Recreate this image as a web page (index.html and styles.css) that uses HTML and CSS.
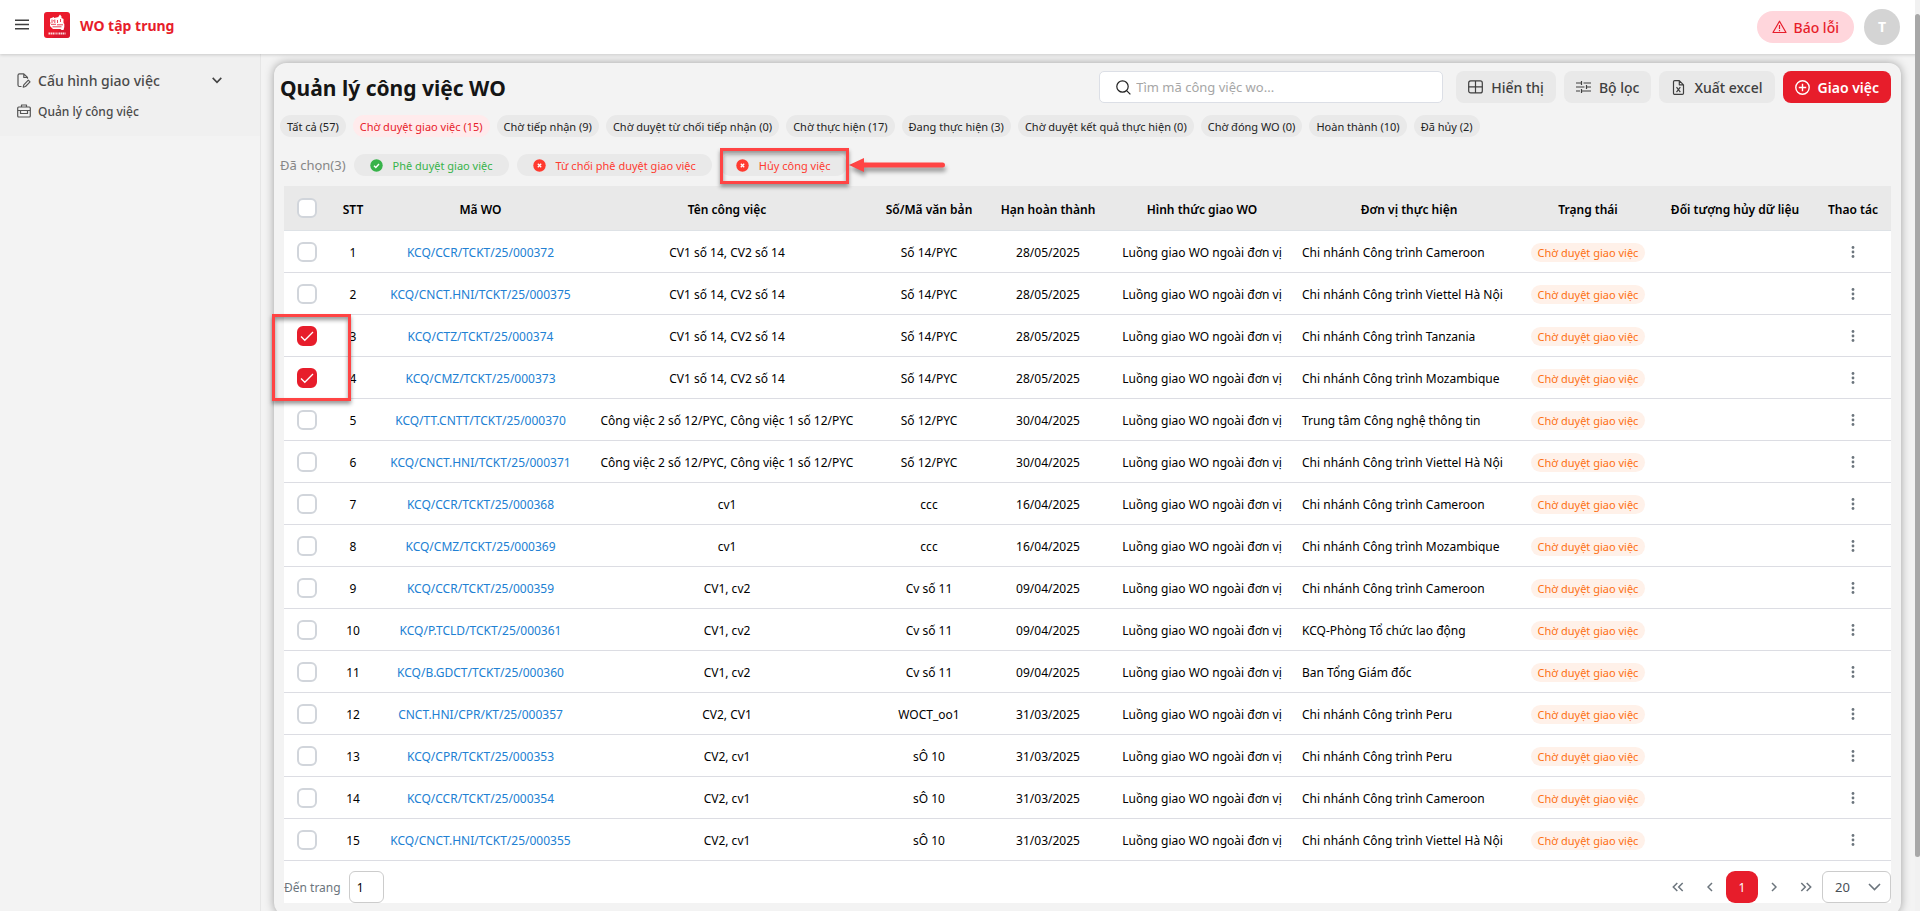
FILE: index.html
```html
<!DOCTYPE html>
<html lang="vi">
<head>
  <meta charset="UTF-8">
  <meta name="viewport" content="width=device-width, initial-scale=1.0">
  <title>Quản lý công việc WO</title>
  <link rel="stylesheet" href="styles.css">
</head>
<body>

  <header class="topbar">
    <button class="menu-btn" type="button" aria-label="Menu">
      <svg width="14" height="12" viewBox="0 0 14 12" fill="none" stroke="#3f3f3f" stroke-width="1.4"><path d="M0 1.2h14M0 5.5h14M0 9.8h14"/></svg>
    </button>
    <svg class="logo" width="26" height="26" viewBox="0 0 26 26">
      <rect width="26" height="26" rx="3" fill="#ea1a2c"/>
      <path d="M26 6v17a3 3 0 0 1-3 3H8z" fill="#cf1630" opacity=".6"/>
      <path d="M6 6.500l4-1.500v1l4.500-1V4.500l1.500-2 1.500 2v1.500l2 1v4l.8 1v3l-.8 3h-2l-1-1H9l-3-3v-2l.6-1L6 10z" fill="#fff"/>
      <path d="M8 7.500v3.500M10.800 7.500v3.500M13.500 8v3M16.500 7v3M9 8.800h1M7 12.300h5M13 12.800h6M8.500 14.800h9" stroke="#e4172f" stroke-width=".8"/>
      <path d="M4.500 21.500h7M14.500 21.500h7M12.300 21.500h1.200" stroke="#fff" stroke-width="2" stroke-dasharray="1.500 .5" opacity=".85"/>
    </svg>
    <span class="brand">WO tập trung</span>
    <button class="report-btn" type="button">
      <svg width="15" height="14" viewBox="0 0 15 14" fill="none" stroke="#e71d2b" stroke-width="1.200" stroke-linejoin="round"><path d="M7.500 1.200L14 12.500H1z"/><path d="M7.500 5v4M7.500 10v1.200"/></svg>
      Báo lỗi
    </button>
    <div class="avatar">T</div>
  </header>

  <div class="layout">
    <nav class="sidebar">
      <div class="menu">
        <a href="#" class="menu-item menu-parent">
          <svg width="14" height="15" viewBox="0 0 14 15" fill="none" stroke="#555" stroke-width="1.200" stroke-linejoin="round"><path d="M4.500 13.500h-2a1.500 1.500 0 0 1-1.500-1.500V2.200A1.500 1.500 0 0 1 2.500.8h4.300l3.700 3.700v1.300M6.800.8v3.700h3.700"/><path d="M11.300 7.200l1.700 1.700-4.500 4.600-2.300.6.600-2.300z"/></svg>
          <span>Cấu hình giao việc</span>
          <svg class="chevron" width="10" height="7" viewBox="0 0 10 7" fill="none" stroke="#444" stroke-width="1.600"><path d="M.7.900L5 5.300 9.300.900"/></svg>
        </a>
        <a href="#" class="menu-item menu-child">
          <svg width="14" height="14" viewBox="0 0 14 14" fill="none" stroke="#555" stroke-width="1.200" stroke-linejoin="round"><rect x=".7" y="3" width="12.600" height="10" rx="1"/><path d="M4.500 3V1h5v2M.7 6.500h12.600M3.500 6.500v3h7v-3"/></svg>
          <span>Quản lý công việc</span>
        </a>
      </div>
    </nav>

    <main class="content">
      <section class="card">
        <div class="card-head">
          <h1>Quản lý công việc WO</h1>
          <label class="search">
            <svg width="15" height="15" viewBox="0 0 15 15" fill="none" stroke="#222" stroke-width="1.200"><circle cx="6.500" cy="6.500" r="5.700"/><path d="M10.600 10.600l3.800 3.800"/></svg>
            <input type="text" placeholder="Tìm mã công việc wo..." aria-label="Tìm mã công việc wo">
          </label>
          <div class="actions">
            <button class="btn" type="button">
              <svg width="15" height="14" viewBox="0 0 15 14" fill="none" stroke="#3f3f3f" stroke-width="1.200"><rect x=".7" y=".9" width="13.600" height="12" rx="2"/><path d="M7.500 1v12M.7 6.900h13.600"/></svg>
              Hiển thị
            </button>
            <button class="btn" type="button">
              <svg width="15" height="14" viewBox="0 0 15 14" fill="none" stroke="#3f3f3f" stroke-width="1.200"><path d="M0 3h5.500M5.500 1v4M7.500 3H15M0 7h8.500M10.500 5v4M10.500 7H15M0 11h4M5.500 9v4M5.500 11H15"/></svg>
              Bộ lọc
            </button>
            <button class="btn" type="button">
              <svg width="15" height="15" viewBox="0 0 15 15" fill="none" stroke="#3f3f3f" stroke-width="1.200" stroke-linejoin="round"><path d="M2.500 1.800A1.200 1.200 0 0 1 3.700.6h4.600l4.200 4.200v8.400a1.200 1.200 0 0 1-1.200 1.200H3.700a1.200 1.200 0 0 1-1.200-1.200zM8.300.6v4.200h4.200"/><path d="M5.500 7.200l3.800 5M9.300 7.200l-3.800 5"/></svg>
              Xuất excel
            </button>
            <button class="btn btn-primary" type="button">
              <svg width="15" height="15" viewBox="0 0 15 15" fill="none" stroke="#fff" stroke-width="1.400"><circle cx="7.500" cy="7.500" r="6.700"/><path d="M7.500 3.800v7.400M3.800 7.500h7.400"/></svg>
              Giao việc
            </button>
          </div>
        </div>

        <div class="chips">
          <button class="chip" type="button">Tất cả (57)</button>
          <button class="chip active" type="button">Chờ duyệt giao việc (15)</button>
          <button class="chip" type="button">Chờ tiếp nhận (9)</button>
          <button class="chip" type="button">Chờ duyệt từ chối tiếp nhận (0)</button>
          <button class="chip" type="button">Chờ thực hiện (17)</button>
          <button class="chip" type="button">Đang thực hiện (3)</button>
          <button class="chip" type="button">Chờ duyệt kết quả thực hiện (0)</button>
          <button class="chip" type="button">Chờ đóng WO (0)</button>
          <button class="chip" type="button">Hoàn thành (10)</button>
          <button class="chip" type="button">Đã hủy (2)</button>
        </div>

        <div class="bulk">
          <span class="bulk-count">Đã chọn(3)</span>
          <button class="bulk-btn approve" type="button">
            <svg width="13" height="13" viewBox="0 0 13 13"><circle cx="6.500" cy="6.500" r="6.200" fill="#37b34a"/><path d="M4 6.700l1.800 1.700L9 5" fill="none" stroke="#fff" stroke-width="1.400"/></svg>
            Phê duyệt giao việc
          </button>
          <button class="bulk-btn reject" type="button">
            <svg width="13" height="13" viewBox="0 0 13 13"><circle cx="6.500" cy="6.500" r="6.200" fill="#ff3b30"/><path d="M4.800 4.800l3.400 3.400M8.200 4.800L4.800 8.200" stroke="#fff" stroke-width="1.300"/></svg>
            Từ chối phê duyệt giao việc
          </button>
          <div class="marked">
            <button class="bulk-btn reject" type="button">
              <svg width="13" height="13" viewBox="0 0 13 13"><circle cx="6.500" cy="6.500" r="6.200" fill="#ff3b30"/><path d="M4.800 4.800l3.400 3.400M8.200 4.800L4.800 8.200" stroke="#fff" stroke-width="1.300"/></svg>
              Hủy công việc
            </button>
            <div class="frame frame-action"></div>
            <svg class="arrow" width="96" height="16" viewBox="0 0 96 16"><path d="M0 8L15 1v4.500h78.500a2.500 2.500 0 0 1 0 5H15V15z" fill="#ff4444"/></svg>
          </div>
        </div>

        <div class="table-box">
          <table class="wo-table">
            <colgroup>
              <col class="c-check"><col class="c-stt"><col class="c-code"><col class="c-name"><col class="c-doc"><col class="c-date"><col class="c-type"><col class="c-unit"><col class="c-status"><col class="c-cancel"><col class="c-action">
            </colgroup>
            <thead>
              <tr>
                <th><input type="checkbox" class="check" aria-label="Chọn tất cả"></th>
                <th>STT</th>
                <th>Mã WO</th>
                <th>Tên công việc</th>
                <th>Số/Mã văn bản</th>
                <th>Hạn hoàn thành</th>
                <th>Hình thức giao WO</th>
                <th>Đơn vị thực hiện</th>
                <th>Trạng thái</th>
                <th>Đối tượng hủy dữ liệu</th>
                <th>Thao tác</th>
              </tr>
            </thead>
            <tbody id="rows"></tbody>
          </table>

          <div class="pager">
            <label for="goto">Đến trang</label>
            <input id="goto" class="goto" type="text" value="1">
            <div class="pages">
              <button type="button" aria-label="Trang đầu"><svg width="12" height="10" viewBox="0 0 12 10" fill="none" stroke="#6c757d" stroke-width="1.500"><path d="M5.300 1L1.300 5l4 4M10.700 1l-4 4 4 4"/></svg></button>
              <button type="button" aria-label="Trang trước"><svg width="6" height="10" viewBox="0 0 6 10" fill="none" stroke="#6c757d" stroke-width="1.500"><path d="M5 1L1 5l4 4"/></svg></button>
              <button type="button" class="current">1</button>
              <button type="button" aria-label="Trang sau"><svg width="6" height="10" viewBox="0 0 6 10" fill="none" stroke="#6c757d" stroke-width="1.500"><path d="M1 1l4 4-4 4"/></svg></button>
              <button type="button" aria-label="Trang cuối"><svg width="12" height="10" viewBox="0 0 12 10" fill="none" stroke="#6c757d" stroke-width="1.500"><path d="M1.300 1l4 4-4 4M6.700 1l4 4-4 4"/></svg></button>
            </div>
            <div class="size">
              <select aria-label="Số dòng"><option>20</option></select>
              <svg width="13" height="8" viewBox="0 0 13 8" fill="none" stroke="#6c757d" stroke-width="1.600"><path d="M1 1l5.500 5.500L12 1"/></svg>
            </div>
          </div>
        </div>
      </section>
    </main>
  </div>

  <div class="scrollbar"><div class="thumb"></div></div>

  <script src="script.js"></script>
</body>
</html>
```

FILE: styles.css
```css
* {
  margin: 0;
  padding: 0;
  box-sizing: border-box;
}

body {
  background-color: #f3f3f3;
  color: #000;
  font-family: "Segoe UI", "Noto Sans", sans-serif;
  font-size: 12px;
  overflow: hidden;
}

button,
input,
select {
  font-family: inherit;
}

button {
  border: none;
  background: none;
  cursor: pointer;
}

a {
  text-decoration: none;
}

/* Top bar */
.topbar {
  display: flex;
  align-items: center;
  height: 54px;
  padding: 0 20px 0 15px;
  background-color: #fff;
  box-shadow: 0 1px 3px rgba(0, 0, 0, 0.16);
  position: relative;
  z-index: 5;
}

.menu-btn {
  display: flex;
  margin-right: 15px;
  margin-bottom: 4px;
}

.logo {
  margin-bottom: 4px;
}

.brand {
  margin-left: 10px;
  margin-bottom: 4px;
  color: #e71d2b;
  font-size: 14px;
  font-weight: 700;
}

.report-btn {
  display: flex;
  align-items: center;
  gap: 7px;
  height: 32px;
  margin-left: auto;
  margin-right: 10px;
  padding: 0 15px;
  border-radius: 16px;
  background-color: #ffd6dc;
  color: #e71d2b;
  font-size: 14px;
  font-weight: 500;
}

.avatar {
  width: 36px;
  height: 36px;
  border-radius: 50%;
  background-color: #d4d4d4;
  color: #fff;
  font-size: 14px;
  font-weight: 700;
  line-height: 36px;
  text-align: center;
}

/* Sidebar */
.layout {
  display: flex;
  height: calc(100vh - 54px);
}

.sidebar {
  flex: 0 0 261px;
  border-right: 1px solid #e6e6e6;
}

.menu {
  height: 82px;
  padding: 14px 38px 0 17px;
  background-color: #f0f0f0;
}

.menu-item {
  display: flex;
  align-items: center;
  gap: 7px;
  height: 24px;
  color: #4a4a4a;
  font-weight: 500;
}

.menu-parent {
  margin-bottom: 7px;
  font-size: 14px;
}

.chevron {
  margin-left: auto;
}

/* Content card */
.content {
  flex: 1;
  min-width: 0;
  padding: 9px 19px 0 13px;
}

.card {
  padding: 8px 10px 12px 6px;
  border-radius: 12px;
  background-color: #f3f3f3;
  box-shadow: 0 0 10px rgba(0, 0, 0, 0.35);
}

.card-head {
  display: flex;
  align-items: center;
  height: 32px;
}

h1 {
  padding-top: 2px;
  color: #151515;
  font-size: 21px;
  font-weight: 700;
}

.search {
  display: flex;
  align-items: center;
  gap: 5px;
  width: 344px;
  height: 32px;
  margin-left: auto;
  padding: 0 16px;
  border: 1px solid #dcdfe6;
  border-radius: 5px;
  background-color: #fff;
}

.search input {
  flex: 1;
  min-width: 0;
  border: none;
  outline: none;
  font-size: 13px;
}

.search input::placeholder {
  color: #a6a6a6;
}

.actions {
  display: flex;
  gap: 8px;
  margin-left: 13px;
}

.btn {
  display: flex;
  align-items: center;
  gap: 8px;
  height: 32px;
  padding: 0 12px;
  border-radius: 8px;
  background-color: #e9e9e9;
  color: #3f3f3f;
  font-size: 14px;
  font-weight: 500;
}

.btn-primary {
  background-color: #e71d2b;
  color: #fff;
  font-weight: 600;
}

/* Status filters */
.chips {
  display: flex;
  gap: 7px;
  margin-top: 12px;
}

.chip {
  height: 22px;
  padding: 0 7px;
  border-radius: 11px;
  background-color: #e9e9e9;
  color: #222;
  font-size: 11px;
}

.chip.active {
  background-color: #ffebec;
  color: #e71d2b;
}

.bulk {
  display: flex;
  align-items: center;
  gap: 8px;
  margin-top: 17px;
}

.bulk-count {
  color: #868686;
  font-size: 13px;
}

.bulk-btn {
  display: flex;
  align-items: center;
  gap: 10px;
  height: 22px;
  padding: 0 16px;
  border-radius: 11px;
  background-color: #e9e9e9;
  font-size: 11px;
}

.approve {
  color: #37b34a;
}

.reject {
  color: #ff3b30;
}

/* Highlight frames and arrow */
.marked {
  position: relative;
}

.frame {
  position: absolute;
  border: 3px solid #ff4444;
  box-shadow: 0 3px 4px rgba(0, 0, 0, 0.4), inset 0 3px 4px rgba(0, 0, 0, 0.4);
  pointer-events: none;
  z-index: 2;
}

.frame-action {
  top: -6px;
  bottom: -8px;
  left: 0;
  right: -2px;
}

.arrow {
  position: absolute;
  top: 3px;
  left: calc(100% + 2px);
  filter: drop-shadow(1px 4px 2px rgba(0, 0, 0, 0.4));
}

/* Table */
.table-box {
  margin: 10px 0 0 4px;
  background-color: #fff;
}

.wo-table {
  width: 100%;
  border-collapse: separate;
  border-spacing: 0;
  table-layout: fixed;
}

.c-check { width: 46px; }
.c-stt { width: 46px; }
.c-code { width: 209px; }
.c-name { width: 284px; }
.c-doc { width: 120px; }
.c-date { width: 118px; }
.c-type { width: 190px; }
.c-unit { width: 224px; }
.c-status { width: 134px; }
.c-cancel { width: 160px; }
.c-action { width: 76px; }

th {
  height: 45px;
  padding-top: 2px;
  background-color: #e9e9e9;
  border-bottom: 1px solid #dee2e6;
  font-size: 12px;
  font-weight: 600;
  white-space: nowrap;
}

td {
  position: relative;
  height: 42px;
  padding-top: 2px;
  border-bottom: 1px solid #dcdde3;
  text-align: center;
  white-space: nowrap;
}

th:first-child,
td:first-child,
td:last-child {
  padding-top: 0;
}

td.unit {
  padding-left: 5px;
  text-align: left;
}

.code {
  color: #2180d3;
}

.check {
  appearance: none;
  display: block;
  width: 20px;
  height: 20px;
  margin: 0 auto;
  border: 2px solid #d1d5db;
  border-radius: 6px;
  background-color: #fff;
}

.check:checked {
  border-color: #e71d2b;
  background: #e71d2b url("data:image/svg+xml,%3Csvg xmlns='http://www.w3.org/2000/svg' viewBox='0 0 16 16' fill='none' stroke='white' stroke-width='1.3'%3E%3Cpath d='M2 8.500l3.800 3.800L14 4'/%3E%3C/svg%3E") center / 16px no-repeat;
}

.frame-rows {
  top: -1px;
  left: -12px;
  width: 79px;
  height: 87px;
}

.status {
  display: inline-block;
  height: 19px;
  padding: 0 7px;
  border-radius: 10px;
  background-color: #fff1e9;
  color: #fd7014;
  font-size: 11px;
  line-height: 19px;
}

.more {
  display: block;
  height: 12px;
  margin: 0 auto;
}

.more svg {
  display: block;
}

/* Pager */
.pager {
  display: flex;
  align-items: center;
  padding-top: 10px;
  color: #6c757d;
}

.goto {
  width: 35px;
  height: 32px;
  margin-left: 8px;
  padding: 0 7px;
  border: 1px solid #ccc;
  border-radius: 6px;
  font-size: 12px;
}

.pages {
  display: flex;
  margin-left: auto;
}

.pages button {
  display: flex;
  align-items: center;
  justify-content: center;
  width: 32px;
  height: 32px;
}

.pages .current {
  border-radius: 9px;
  background-color: #e71d2b;
  color: #fff;
  font-size: 12px;
}

.size {
  display: flex;
  align-items: center;
  position: relative;
}

.size select {
  appearance: none;
  width: 69px;
  height: 32px;
  padding: 0 12px;
  border: 1px solid #ccc;
  border-radius: 6px;
  background-color: #fff;
  color: #495057;
  font-size: 13px;
}

.size svg {
  position: absolute;
  right: 10px;
  pointer-events: none;
}

.scrollbar {
  position: fixed;
  top: 0;
  right: 0;
  bottom: 0;
  width: 5px;
  padding-top: 14px;
  background-color: #f1f1f1;
  z-index: 10;
}

.thumb {
  height: 94%;
  border-radius: 3px;
  background-color: #a8a8a8;
}
```

FILE: script.js
```js
const cv14 = 'CV1 số 14, CV2 số 14';
const cv12 = 'Công việc 2 số 12/PYC, Công việc 1 số 12/PYC';

// code, name, document, deadline, unit
const data = [
  ['KCQ/CCR/TCKT/25/000372', cv14, 'Số 14/PYC', '28/05/2025', 'Chi nhánh Công trình Cameroon'],
  ['KCQ/CNCT.HNI/TCKT/25/000375', cv14, 'Số 14/PYC', '28/05/2025', 'Chi nhánh Công trình Viettel Hà Nội'],
  ['KCQ/CTZ/TCKT/25/000374', cv14, 'Số 14/PYC', '28/05/2025', 'Chi nhánh Công trình Tanzania'],
  ['KCQ/CMZ/TCKT/25/000373', cv14, 'Số 14/PYC', '28/05/2025', 'Chi nhánh Công trình Mozambique'],
  ['KCQ/TT.CNTT/TCKT/25/000370', cv12, 'Số 12/PYC', '30/04/2025', 'Trung tâm Công nghệ thông tin'],
  ['KCQ/CNCT.HNI/TCKT/25/000371', cv12, 'Số 12/PYC', '30/04/2025', 'Chi nhánh Công trình Viettel Hà Nội'],
  ['KCQ/CCR/TCKT/25/000368', 'cv1', 'ccc', '16/04/2025', 'Chi nhánh Công trình Cameroon'],
  ['KCQ/CMZ/TCKT/25/000369', 'cv1', 'ccc', '16/04/2025', 'Chi nhánh Công trình Mozambique'],
  ['KCQ/CCR/TCKT/25/000359', 'CV1, cv2', 'Cv số 11', '09/04/2025', 'Chi nhánh Công trình Cameroon'],
  ['KCQ/P.TCLD/TCKT/25/000361', 'CV1, cv2', 'Cv số 11', '09/04/2025', 'KCQ-Phòng Tổ chức lao động'],
  ['KCQ/B.GDCT/TCKT/25/000360', 'CV1, cv2', 'Cv số 11', '09/04/2025', 'Ban Tổng Giám đốc'],
  ['CNCT.HNI/CPR/KT/25/000357', 'CV2, CV1', 'WOCT_oo1', '31/03/2025', 'Chi nhánh Công trình Peru'],
  ['KCQ/CPR/TCKT/25/000353', 'CV2, cv1', 'sÔ 10', '31/03/2025', 'Chi nhánh Công trình Peru'],
  ['KCQ/CCR/TCKT/25/000354', 'CV2, cv1', 'sÔ 10', '31/03/2025', 'Chi nhánh Công trình Cameroon'],
  ['KCQ/CNCT.HNI/TCKT/25/000355', 'CV2, cv1', 'sÔ 10', '31/03/2025', 'Chi nhánh Công trình Viettel Hà Nội']
];

const checked = [2, 3];

document.getElementById('rows').innerHTML = data.map((r, i) => `
  <tr>
    <td>
      <input type="checkbox" class="check" aria-label="Chọn dòng ${i + 1}" ${checked.includes(i) ? 'checked' : ''}>
      ${i === checked[0] ? '<div class="frame frame-rows"></div>' : ''}
    </td>
    <td>${i + 1}</td>
    <td><a href="#" class="code">${r[0]}</a></td>
    <td>${r[1]}</td>
    <td>${r[2]}</td>
    <td>${r[3]}</td>
    <td>Luồng giao WO ngoài đơn vị</td>
    <td class="unit">${r[4]}</td>
    <td><span class="status">Chờ duyệt giao việc</span></td>
    <td></td>
    <td><button class="more" type="button" aria-label="Thao tác"><svg width="4" height="12" viewBox="0 0 4 12" fill="#6c757d"><circle cx="2" cy="1.500" r="1.400"/><circle cx="2" cy="6" r="1.400"/><circle cx="2" cy="10.500" r="1.400"/></svg></button></td>
  </tr>`).join('');
```
